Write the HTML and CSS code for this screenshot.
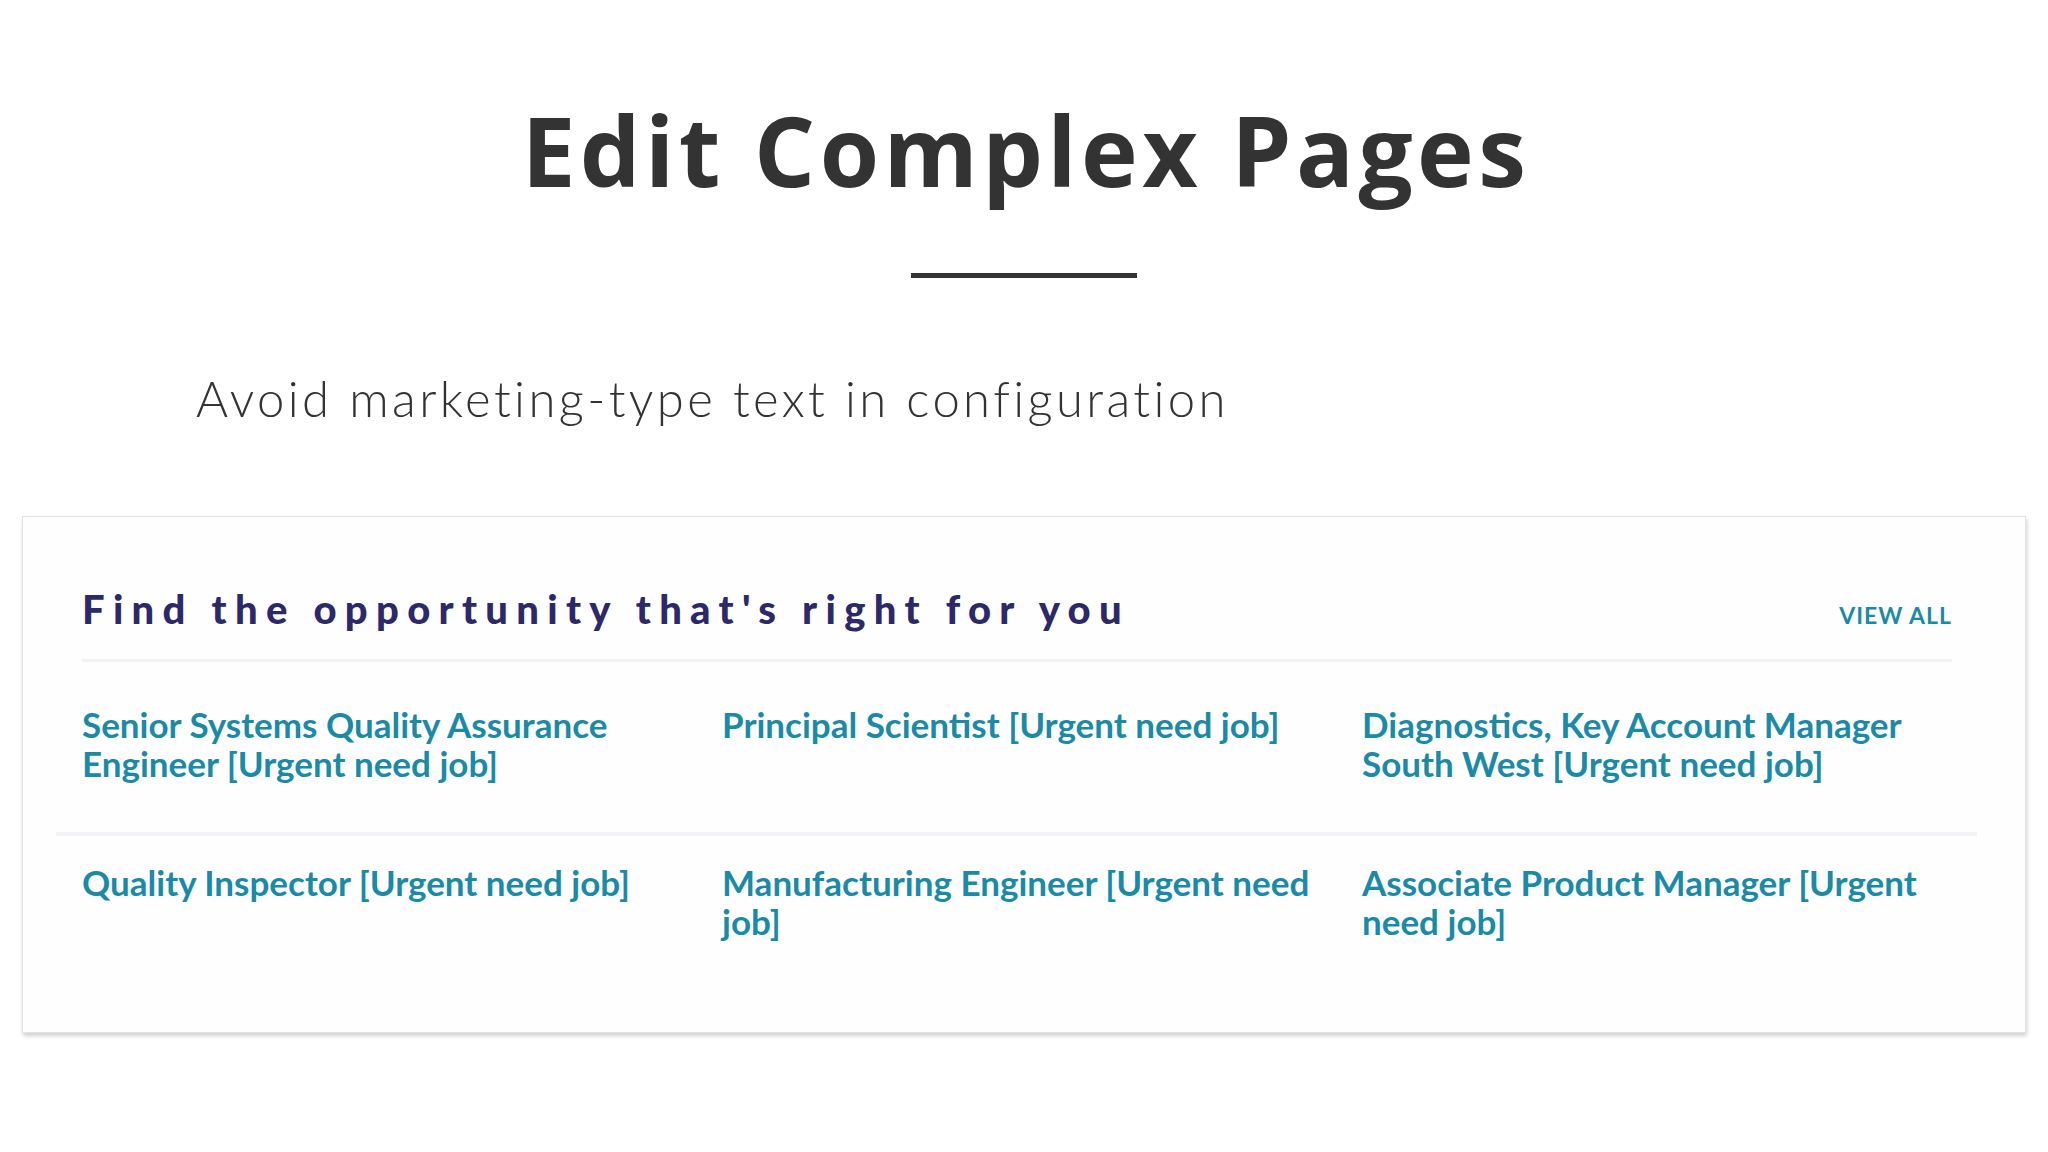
FILE: index.html
```html
<!DOCTYPE html>
<html lang="en">
<head>
<meta charset="utf-8">
<title>Edit Complex Pages</title>
<link rel="stylesheet" href="styles.css">
</head>
<body>
<main class="slide">
  <header class="hero">
    <h1 class="hero-title">Edit Complex Pages</h1>
    <div class="hero-rule"></div>
  </header>
  <p class="lead">Avoid marketing-type text in configuration</p>
  <section class="card">
    <div class="card-head">
      <h2 class="card-title">Find the opportunity that's right for you</h2>
      <a class="view-all" href="#">VIEW ALL</a>
    </div>
    <div class="head-divider"></div>
    <div class="job-row first">
      <a class="job" href="#">Senior Systems Quality Assurance Engineer [Urgent need job]</a>
      <a class="job" href="#">Principal Scientist [Urgent need job]</a>
      <a class="job" href="#">Diagnostics, Key Account Manager South West [Urgent need job]</a>
    </div>
    <div class="row-divider"></div>
    <div class="job-row second">
      <a class="job" href="#">Quality Inspector [Urgent need job]</a>
      <a class="job" href="#">Manufacturing Engineer [Urgent need job]</a>
      <a class="job" href="#">Associate Product Manager [Urgent need job]</a>
    </div>
  </section>
</main>
</body>
</html>
```

FILE: styles.css
```css
html, body {
  margin: 0;
  padding: 0;
  background: #ffffff;
}

.slide {
  width: 2048px;
  height: 1152px;
  overflow: hidden;
  font-family: "Lato", "Open Sans", sans-serif;
  color: #333333;
}

.hero {
  padding-top: 94px;
  display: flex;
  flex-direction: column;
  align-items: center;
}

.hero-title {
  margin: 0;
  padding-left: 4px;
  font-family: "Open Sans", "Lato", sans-serif;
  font-weight: 700;
  font-size: 96px;
  line-height: 112px;
  color: #333333;
  letter-spacing: 4.4px;
}

.hero-rule {
  margin-top: 67px;
  width: 226px;
  height: 5px;
  background: #333333;
}

.lead {
  margin: 90px 0 0 196px;
  font-family: "Lato", sans-serif;
  font-weight: 300;
  font-size: 49px;
  line-height: 60px;
  letter-spacing: 3.4px;
  color: #333333;
}

.card {
  margin: 88px 22px 0 22px;
  border: 1px solid #e2e2e2;
  box-shadow: 1px 3px 4px rgba(0, 0, 0, 0.18);
  background: #fefefe;
  padding: 70px 73px 0 59px;
  height: 517px;
  box-sizing: border-box;
}

.card-head {
  display: flex;
  justify-content: space-between;
  align-items: baseline;
  padding-bottom: 27px;
}

.card-title {
  margin: 0;
  font-family: "Lato", sans-serif;
  font-weight: 900;
  font-size: 40px;
  line-height: 45px;
  letter-spacing: 8.3px;
  color: #2d2867;
}

.view-all {
  font-family: "Lato", sans-serif;
  font-weight: 700;
  font-size: 23px;
  letter-spacing: 1px;
  color: #1a8aa6;
  text-decoration: none;
}

.head-divider {
  height: 3px;
  background: #f2f2f4;
}

.row-divider {
  height: 4px;
  background: #f3f3f5;
  margin: 0 -25px 0 -26px;
}

.job-row {
  display: grid;
  grid-template-columns: repeat(3, 590px);
  column-gap: 50px;
}

.job-row.first {
  padding: 43px 0 49px 0;
}

.job-row.second {
  padding: 27px 0 0 0;
}

.job {
  font-family: "Lato", sans-serif;
  font-weight: 700;
  font-size: 35px;
  line-height: 39px;
  color: #1a8aa6;
  text-decoration: none;
}
```
